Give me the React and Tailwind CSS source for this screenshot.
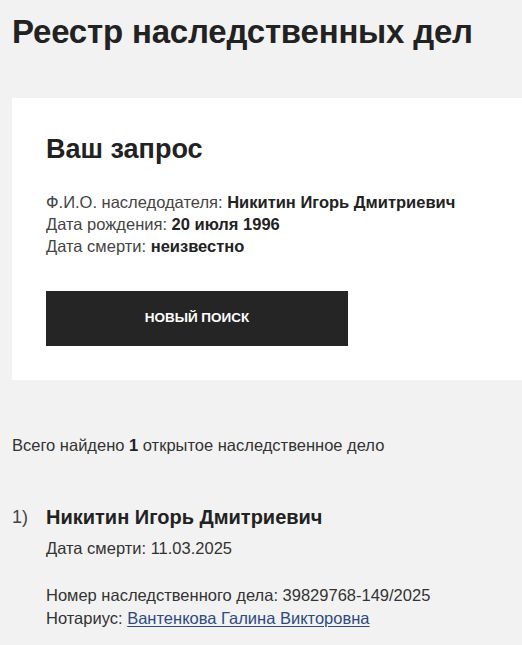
export default function App() {
  return (
    <div
      className="min-h-screen bg-[#f2f2f2] text-[#222] overflow-hidden"
      style={{ fontFamily: '"Liberation Sans", Arial, sans-serif' }}
    >
      <h1 className="pl-3 pt-[12px] text-[33px] leading-[39px] font-bold tracking-[-0.2px] text-[#222]">
        Реестр наследственных дел
      </h1>

      <div className="ml-3 mt-[47px] bg-white pl-[34px] pt-[36px] pb-[34px]">
        <h2 className="text-[27px] leading-[30px] font-bold text-[#222]">Ваш запрос</h2>
        <div className="mt-[27px] text-[16.5px] leading-[22px] text-[#333]">
          <p>
            <span className="text-[#444]">Ф.И.О. наследодателя:</span>{' '}
            <b className="font-bold text-[#222]">Никитин Игорь Дмитриевич</b>
          </p>
          <p>
            <span className="text-[#444]">Дата рождения:</span>{' '}
            <b className="font-bold text-[#222]">20 июля 1996</b>
          </p>
          <p>
            <span className="text-[#444]">Дата смерти:</span>{' '}
            <b className="font-bold text-[#222]">неизвестно</b>
          </p>
        </div>
        <button className="mt-[34px] flex h-[55px] w-[302px] items-center justify-center bg-[#252525] text-[13.5px] font-bold uppercase text-white">
          Новый поиск
        </button>
      </div>

      <p className="mt-[54px] pl-3 text-[16.5px] leading-[22px] text-[#333]">
        Всего найдено <b className="font-bold text-[#222]">1</b> открытое наследственное дело
      </p>

      <div className="mt-[48px] flex pl-3">
        <span className="w-[34px] text-[18px] leading-[26px] text-[#444]">1)</span>
        <div>
          <h3 className="text-[20px] leading-[26px] font-bold text-[#222]">Никитин Игорь Дмитриевич</h3>
          <p className="mt-[7px] text-[16.5px] leading-[22px] text-[#333]">Дата смерти: 11.03.2025</p>
          <p className="mt-[25px] text-[16.5px] leading-[23px] text-[#333]">
            Номер наследственного дела: 39829768-149/2025
          </p>
          <p className="text-[16.5px] leading-[23px] text-[#333]">
            Нотариус:{' '}
            <a href="#" className="text-[#2f4a7e] underline underline-offset-2">
              Вантенкова Галина Викторовна
            </a>
          </p>
        </div>
      </div>
    </div>
  );
}
